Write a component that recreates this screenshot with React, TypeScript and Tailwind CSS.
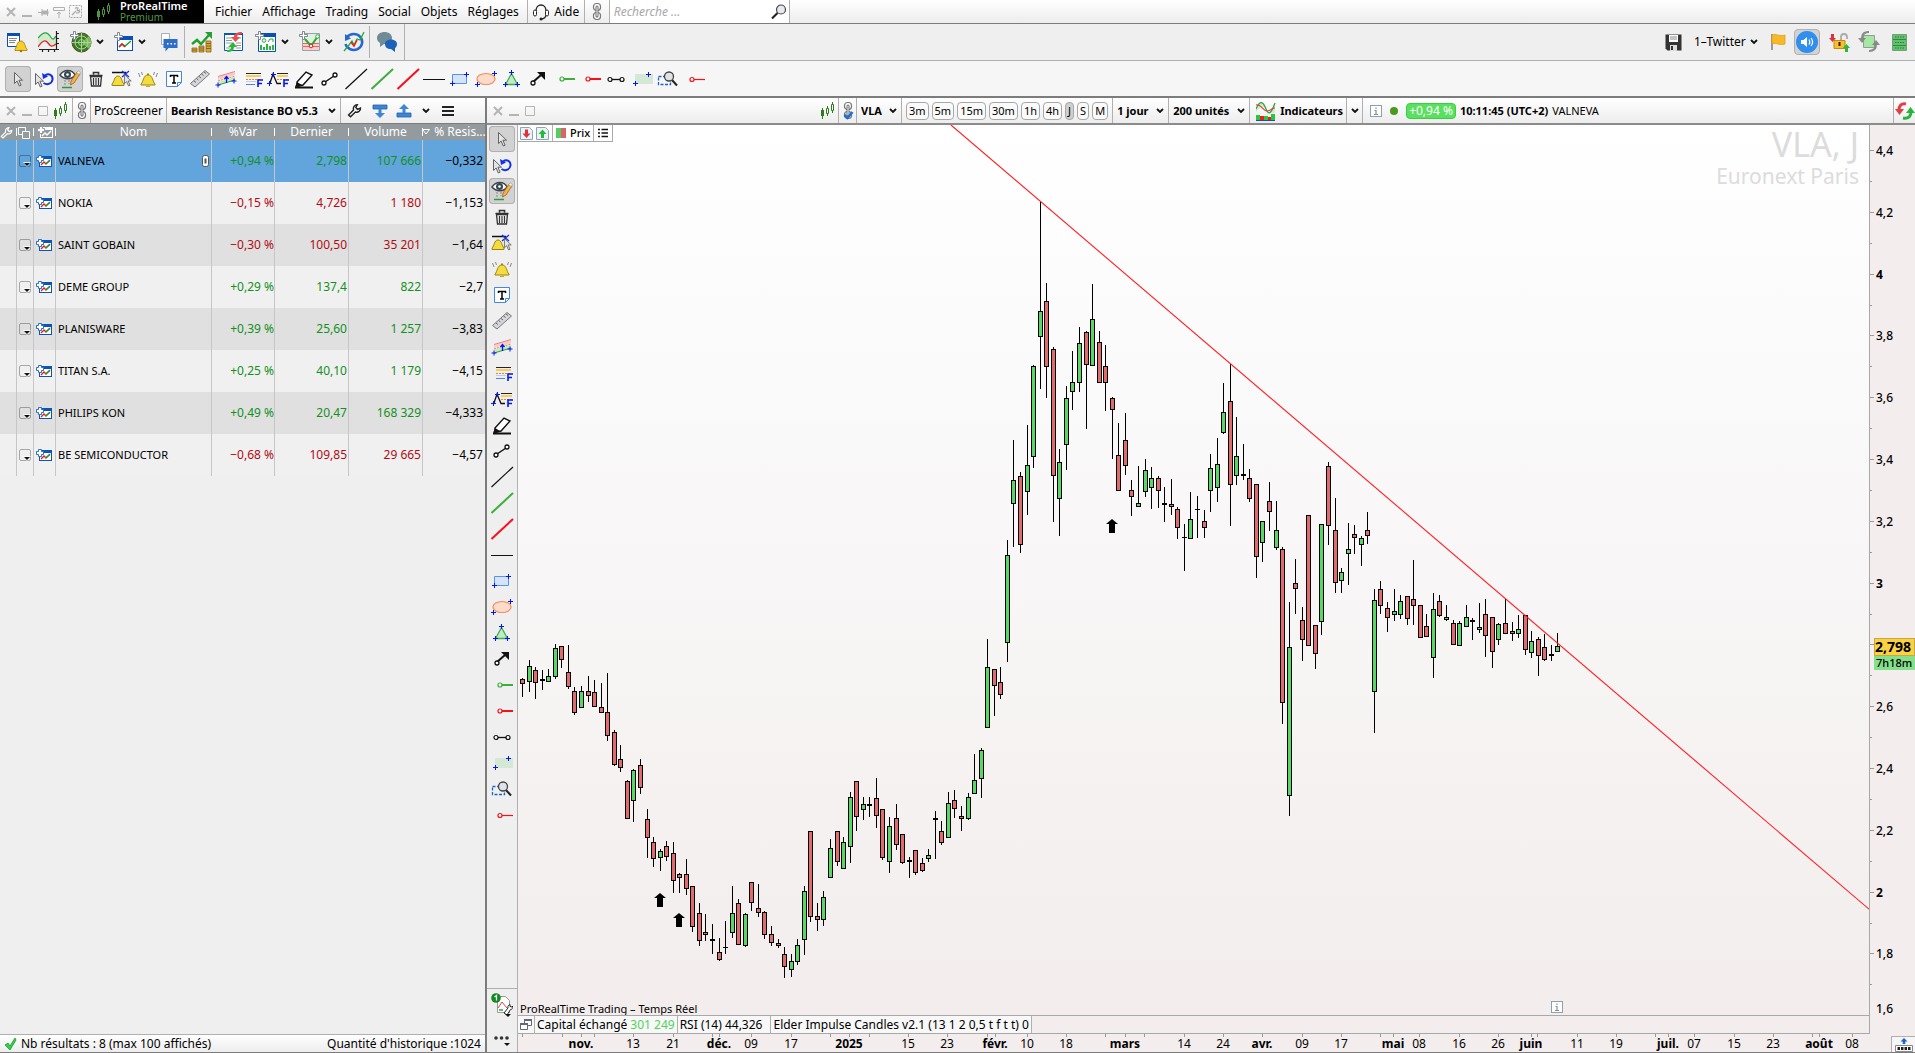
import { useState, type ReactNode } from 'react'
import clsx from 'clsx'

/* ---------- data ---------- */

interface Row {
  name: string
  change: string
  last: string
  volume: string
  resistance: string
  up: boolean
}

const ROWS: Row[] = [
  { name: 'VALNEVA', change: '+0,94 %', last: '2,798', volume: '107 666', resistance: '−0,332', up: true },
  { name: 'NOKIA', change: '−0,15 %', last: '4,726', volume: '1 180', resistance: '−1,153', up: false },
  { name: 'SAINT GOBAIN', change: '−0,30 %', last: '100,50', volume: '35 201', resistance: '−1,64', up: false },
  { name: 'DEME GROUP', change: '+0,29 %', last: '137,4', volume: '822', resistance: '−2,7', up: true },
  { name: 'PLANISWARE', change: '+0,39 %', last: '25,60', volume: '1 257', resistance: '−3,83', up: true },
  { name: 'TITAN S.A.', change: '+0,25 %', last: '40,10', volume: '1 179', resistance: '−4,15', up: true },
  { name: 'PHILIPS KON', change: '+0,49 %', last: '20,47', volume: '168 329', resistance: '−4,333', up: true },
  { name: 'BE SEMICONDUCTOR', change: '−0,68 %', last: '109,85', volume: '29 665', resistance: '−4,57', up: false },
]

// high, body top, body bottom, low, then g(reen) / r(ed)
type Candle = [number, number, number, number, 'g' | 'r']

const CANDLES: Candle[] = [
  [678, 679, 684, 697, 'r'], [660, 666, 682, 692, 'g'], [667, 670, 683, 699, 'r'], [670, 679, 681, 690, 'r'],
  [669, 676, 682, 682, 'g'], [644, 648, 677, 679, 'g'], [646, 646, 660, 668, 'r'], [645, 672, 687, 689, 'r'],
  [687, 691, 713, 715, 'r'], [686, 691, 708, 708, 'g'], [676, 691, 696, 702, 'r'], [680, 692, 707, 707, 'r'],
  [683, 707, 713, 713, 'r'], [673, 712, 736, 741, 'r'], [730, 732, 765, 766, 'r'], [745, 759, 768, 772, 'r'],
  [780, 781, 819, 819, 'r'], [769, 770, 801, 822, 'g'], [759, 765, 788, 794, 'r'], [809, 819, 838, 858, 'r'],
  [837, 842, 859, 867, 'r'], [849, 851, 858, 871, 'g'], [841, 846, 857, 861, 'r'], [842, 853, 881, 893, 'r'],
  [873, 874, 878, 893, 'r'], [859, 874, 889, 895, 'r'], [886, 886, 927, 932, 'r'], [903, 913, 941, 946, 'r'],
  [914, 932, 935, 941, 'r'], [924, 939, 941, 954, 'r'], [938, 952, 960, 961, 'r'], [921, 947, 948, 954, 'r'],
  [886, 913, 933, 938, 'g'], [899, 903, 945, 945, 'r'], [913, 914, 946, 947, 'g'], [882, 882, 903, 911, 'r'],
  [884, 908, 913, 917, 'r'], [911, 912, 935, 939, 'r'], [926, 934, 943, 946, 'r'], [939, 943, 946, 948, 'r'],
  [947, 954, 967, 978, 'r'], [954, 961, 970, 977, 'g'], [939, 945, 962, 965, 'g'], [886, 891, 940, 955, 'g'],
  [831, 831, 917, 922, 'r'], [903, 916, 920, 931, 'r'], [891, 897, 920, 926, 'g'], [839, 848, 878, 878, 'g'],
  [831, 831, 862, 866, 'r'], [837, 842, 869, 869, 'g'], [792, 797, 847, 863, 'g'], [781, 781, 817, 831, 'r'],
  [797, 804, 810, 820, 'g'], [797, 804, 806, 817, 'r'], [778, 798, 816, 828, 'r'], [809, 809, 858, 860, 'r'],
  [817, 826, 862, 873, 'g'], [804, 818, 845, 850, 'r'], [834, 834, 863, 864, 'r'], [857, 860, 862, 878, 'r'],
  [850, 850, 873, 875, 'r'], [858, 863, 871, 872, 'r'], [849, 855, 859, 862, 'g'], [811, 818, 820, 859, 'r'],
  [821, 831, 843, 845, 'r'], [792, 803, 838, 838, 'g'], [790, 800, 809, 818, 'r'], [806, 816, 819, 831, 'r'],
  [793, 797, 819, 820, 'g'], [754, 780, 794, 794, 'g'], [748, 750, 779, 798, 'g'], [639, 667, 728, 728, 'g'],
  [669, 669, 686, 716, 'r'], [667, 682, 695, 699, 'r'], [540, 555, 643, 662, 'g'], [440, 480, 504, 547, 'g'],
  [472, 476, 545, 553, 'r'], [425, 465, 492, 515, 'g'], [365, 366, 457, 468, 'g'], [202, 311, 337, 389, 'g'],
  [283, 301, 367, 398, 'r'], [347, 349, 476, 522, 'r'], [449, 462, 499, 536, 'g'], [386, 398, 445, 470, 'g'],
  [351, 382, 392, 410, 'g'], [327, 343, 383, 392, 'g'], [331, 332, 365, 429, 'r'], [284, 319, 366, 366, 'g'],
  [331, 342, 383, 383, 'r'], [345, 366, 383, 411, 'r'], [397, 398, 410, 459, 'r'], [423, 455, 491, 491, 'r'],
  [413, 440, 466, 475, 'r'], [480, 490, 497, 516, 'r'], [466, 503, 507, 507, 'g'], [459, 470, 492, 497, 'g'],
  [467, 478, 488, 509, 'g'], [476, 478, 491, 508, 'r'], [487, 503, 505, 522, 'r'], [479, 504, 507, 515, 'r'],
  [507, 509, 528, 539, 'r'], [524, 537, 538, 571, 'r'], [492, 519, 539, 539, 'g'], [496, 509, 510, 538, 'r'],
  [510, 521, 528, 538, 'r'], [454, 468, 491, 512, 'g'], [438, 464, 488, 502, 'g'], [383, 412, 433, 434, 'g'],
  [364, 401, 485, 526, 'r'], [417, 456, 476, 485, 'g'], [444, 474, 476, 480, 'r'], [469, 478, 499, 502, 'r'],
  [484, 484, 557, 578, 'r'], [521, 521, 543, 562, 'g'], [482, 501, 512, 531, 'r'], [501, 530, 548, 550, 'g'],
  [547, 549, 703, 724, 'r'], [602, 647, 796, 816, 'g'], [559, 583, 589, 614, 'r'], [607, 620, 640, 661, 'r'],
  [515, 515, 646, 646, 'r'], [625, 625, 654, 669, 'r'], [524, 524, 622, 635, 'g'], [462, 466, 526, 545, 'r'],
  [498, 530, 583, 593, 'r'], [568, 572, 581, 593, 'g'], [523, 549, 554, 585, 'g'], [525, 534, 538, 554, 'r'],
  [536, 538, 545, 566, 'g'], [512, 530, 536, 544, 'r'], [589, 600, 692, 733, 'g'], [581, 589, 606, 614, 'r'],
  [602, 608, 618, 632, 'r'], [589, 611, 615, 621, 'g'], [595, 601, 615, 619, 'g'], [596, 596, 619, 625, 'r'],
  [560, 599, 606, 625, 'r'], [605, 605, 638, 638, 'r'], [614, 626, 637, 637, 'r'], [593, 609, 658, 678, 'g'],
  [595, 601, 616, 617, 'r'], [605, 617, 620, 621, 'g'], [620, 623, 645, 645, 'r'], [621, 623, 646, 646, 'g'],
  [605, 617, 627, 627, 'g'], [618, 620, 622, 640, 'r'], [603, 627, 630, 633, 'g'], [599, 614, 636, 657, 'r'],
  [617, 617, 652, 668, 'r'], [623, 624, 640, 645, 'g'], [599, 623, 634, 634, 'r'], [622, 631, 634, 641, 'r'],
  [615, 629, 634, 638, 'g'], [615, 615, 650, 655, 'r'], [631, 641, 653, 658, 'g'], [637, 639, 656, 676, 'r'],
  [634, 647, 660, 661, 'r'], [645, 654, 656, 661, 'r'], [633, 646, 652, 652, 'g'],
]

const BAR_STEP = 6.553
const PLOT_LEFT = 518
const PLOT_TOP = 125

const ARROWS = [
  [660, 893],
  [679, 913],
  [1112, 519],
]

const DATES: [number, string, boolean?][] = [
  [581, 'nov.', true], [633, '13'], [673, '21'], [719, 'déc.', true], [751, '09'], [791, '17'],
  [849, '2025', true], [908, '15'], [947, '23'], [995, 'févr.', true], [1027, '10'], [1066, '18'],
  [1125, 'mars', true], [1184, '14'], [1223, '24'], [1262, 'avr.', true], [1302, '09'], [1341, '17'],
  [1393, 'mai', true], [1419, '08'], [1459, '16'], [1498, '26'], [1531, 'juin', true], [1577, '11'],
  [1616, '19'], [1668, 'juil.', true], [1694, '07'], [1734, '15'], [1773, '23'], [1819, 'août', true],
  [1852, '08'],
]
const EXTRA_TICKS = [522, 562, 594, 712, 830, 869, 987, 1105, 1144, 1380, 1537, 1655, 1812]

const TIMEFRAMES = ['3m', '5m', '15m', '30m', '1h', '4h', 'J', 'S', 'M']

/* ---------- small pieces ---------- */

function Svg({ w = 22, h = 22, children }: { w?: number; h?: number; children: ReactNode }) {
  return (
    <svg width={w} height={h} viewBox={`0 0 ${w} ${h}`} fill="none" aria-hidden="true" className="shrink-0">
      {children}
    </svg>
  )
}

function Sep() {
  return <div className="w-px shrink-0 self-stretch bg-[#b0b0b0]" />
}

function Chevron() {
  return (
    <Svg w={8} h={6}>
      <path d="M1 1l3 3 3-3" stroke="#111" strokeWidth="1.8" />
    </Svg>
  )
}

function IconButton({ label, className, children }: { label: string; className?: string; children: ReactNode }) {
  return (
    <button type="button" aria-label={label} className={clsx('flex shrink-0 items-center justify-center', className)}>
      {children}
    </button>
  )
}

function Dropdown({ label, value, bold = true, className }: { label: string; value: string; bold?: boolean; className?: string }) {
  return (
    <div className={clsx('relative flex shrink-0 items-center', className)}>
      <select
        aria-label={label}
        defaultValue={value}
        className={clsx('w-full appearance-none bg-transparent pr-3 outline-none', bold && 'text-[11px] font-bold')}
      >
        <option>{value}</option>
      </select>
      <span className="pointer-events-none absolute right-1">
        <Chevron />
      </span>
    </div>
  )
}

function WindowButtons() {
  return (
    <div className="flex shrink-0 items-center gap-1 pl-[5px]">
      <IconButton label="Fermer" className="size-3">
        <Svg w={12} h={12}>
          <path d="M2 2l8 8M10 2l-8 8" stroke="#b4b4b4" strokeWidth="2" />
        </Svg>
      </IconButton>
      <IconButton label="Réduire" className="size-3">
        <Svg w={12} h={12}>
          <path d="M1 10h10" stroke="#b4b4b4" strokeWidth="2" />
        </Svg>
      </IconButton>
      <IconButton label="Agrandir" className="size-3">
        <Svg w={12} h={12}>
          <path d="M1.500 1.500h9v9h-9z" stroke="#b4b4b4" />
        </Svg>
      </IconButton>
    </div>
  )
}

function CandlesIcon({ light = false }: { light?: boolean }) {
  const c = light ? '#4c9a3c' : '#2f7d1f'
  return (
    <Svg w={16} h={18}>
      <path d="M2.500 6v11M7.500 4v10M12.500 0v11" stroke={c} />
      <path d="M1 8h3v6H1z" fill={c} />
      <path d="M6.500 6.500h2v5h-2zM11.500 2.500h2v6h-2z" fill={light ? '#000' : '#fff'} stroke={c} />
    </Svg>
  )
}

function ChainIcon({ checked = false }: { checked?: boolean }) {
  return (
    <Svg w={12} h={20}>
      <rect x="2.500" y="1.500" width="7" height="7" rx="3" fill="#fff" stroke="#777" strokeWidth="1.200" />
      <rect x="2.500" y="10.500" width="7" height="7" rx="3" fill="#fff" stroke="#777" strokeWidth="1.200" />
      <path d="M6 5v9" stroke="#666" strokeWidth="3" strokeLinecap="round" />
      <path d="M6 5v9" stroke="#fff" strokeLinecap="round" />
      {checked && <path d="M2.500 14l3 3 5-6" stroke="#1d6fd8" strokeWidth="2.500" />}
    </Svg>
  )
}

function ChartWindow() {
  return (
    <Svg w={20} h={20}>
      <rect x="3.500" y="4.500" width="15" height="14" fill="#fff" stroke="#0a4fb5" />
      <path d="M3 4h16v4H3z" fill="#0a4fb5" />
      <path d="M5 15l3-3 3 2 6-5" stroke="#18a030" strokeWidth="1.500" />
      <path d="M5 15l3-3 3 3" stroke="#e02020" strokeWidth="1.500" />
      <path d="M3.500.5h2v3h3v2h-3v3h-2v-3h-3v-2h3z" fill="#fff" stroke="#7d8890" />
    </Svg>
  )
}

function RowChartIcon({ header = false }: { header?: boolean }) {
  const c = header ? '#fff' : '#0a55b8'
  return (
    <Svg w={16} h={13}>
      <rect x="3.500" y="1.500" width="12" height="10" fill={header ? 'none' : '#fff'} stroke={c} />
      <path d="M3 1h13v3H3z" fill={c} />
      <path d="M5 10l3-3 2 2 4-4" stroke={header ? '#fff' : '#e02020'} strokeWidth="1.300" />
      {!header && <path d="M9.500 9L14 5.500" stroke="#18a030" strokeWidth="1.300" />}
      <path d="M2.500.5h3v2h2v3h-2v2h-3v-2h-2v-3h2z" fill="#fff" stroke={header ? '#939b9f' : '#2a6fc8'} />
    </Svg>
  )
}

function Wrench({ color = '#222', size = 15 }: { color?: string; size?: number }) {
  return (
    <svg width={size} height={size} viewBox="0 0 15 15" fill="none" aria-hidden="true" className="shrink-0">
      <path
        d="M1.500 12l5-5c-.8-2.500 1-5.200 3.800-5.200L8.800 4.500l1.700 1.800L13.500 5c.3 3-2.500 4.800-5 4l-5 4.800z"
        stroke={color}
        strokeWidth="1.400"
      />
    </svg>
  )
}

function Plus({ x, y }: { x: number; y: number }) {
  return <path d={`M${x - 2.5} ${y}h5M${x} ${y - 2.5}v5`} stroke="#0018ee" />
}

const Cursor = ({ x = 0, y = 0 }: { x?: number; y?: number }) => (
  <path
    transform={`translate(${x} ${y})`}
    d="M.5.5v11l2.600-2.500 2.200 5 1.800-.8-2.200-5h3.600z"
    fill="#e4e4e4"
    stroke="#555"
    strokeWidth=".9"
  />
)

const Bell = () => (
  <>
    <path d="M6 18c2.500-2 2-9 7-9s4.500 7 7 9v1H6z" fill="#f4dc3c" stroke="#9a8410" />
    <path d="M11 20h4v1h-4z" fill="#c9a818" />
    <path d="M12 7.500h2V9h-2z" fill="#9a8410" />
  </>
)

/* every drawing tool fills a 26px cell; the same set is used for both tool bars */
const TOOLS: { name: string; icon: ReactNode; active?: boolean }[] = [
  { name: 'Curseur', active: true, icon: <Cursor x={9} y={6} /> },
  {
    name: 'Annuler',
    icon: (
      <>
        <Cursor x={4} y={7} />
        <path d="M14 9.500c4-3 8 0 7.500 4s-5 6-9 3.500" stroke="#1230e8" strokeWidth="2" />
        <path d="M11 7l1 6 5-2.500z" fill="#1230e8" />
      </>
    ),
  },
  {
    name: 'Afficher les objets',
    active: true,
    icon: (
      <>
        <path d="M3 9c4-6 12-6 15 0-3 5-11 5-15 0z" fill="#fff" stroke="#3a4650" strokeWidth="1.500" />
        <circle cx="10.500" cy="8.500" r="3.500" fill="#3a4650" />
        <circle cx="10.500" cy="8.500" r="1.300" fill="#fff" />
        <path d="M8 14v5M12 14v4" stroke="#888" strokeDasharray="2 1" />
        <path d="M5 21.500h10" stroke="#2a9d3a" strokeWidth="1.500" />
        <path d="M14 15l6-9 3 2-6 9-3.500 2z" fill="#f3b04a" stroke="#9a6420" strokeWidth=".8" />
        <path d="M19.500 6.500l3 2 .8-2-2-1.500z" fill="#fff" stroke="#888" strokeWidth=".6" />
      </>
    ),
  },
  {
    name: 'Supprimer',
    icon: (
      <>
        <path d="M6.500 9.500h13M10.500 8.500v-2h5v2" stroke="#333" strokeWidth="1.600" />
        <path d="M7.500 10.500h11l-1 9.500h-9z" fill="#e8e8e8" stroke="#333" strokeWidth="1.300" />
        <path d="M10.500 12v7M13 12v7M15.500 12v7" stroke="#333" strokeWidth="1.100" />
      </>
    ),
  },
  {
    name: 'Alerte sur objet',
    icon: (
      <>
        <path d="M3 6.500h14" stroke="#111" strokeWidth="1.500" />
        <path d="M3 18c2.500-2 2-8 6-8s3.500 6 6 8v1.500H3z" fill="#f4dc3c" stroke="#9a8410" />
        <path d="M13 5l7 6M20 5l-7 6" stroke="#1230e8" strokeWidth="1.300" />
        <g transform="translate(15 8) scale(.85)"><Cursor /></g>
      </>
    ),
  },
  {
    name: 'Alerte',
    icon: (
      <>
        <Bell />
        <path d="M3.500 7L5 11M6.500 6l1 3M22.500 7L21 11M19.500 6l-1 3" stroke="#888" />
      </>
    ),
  },
  {
    name: 'Texte',
    icon: (
      <>
        <path d="M5.500 5.500h15v11l-4 4h-11z" fill="#fff" stroke="#3f86ee" />
        <path d="M20.500 16.500h-4v4" stroke="#3f86ee" />
        <path d="M9.500 11V9.500h7V11M13 9v7.500M11 17h4" stroke="#000" strokeWidth="1.500" />
      </>
    ),
  },
  {
    name: 'Règle',
    icon: (
      <>
        <path d="M3.500 17.500L18 4.500l4.500 3.500L8 21z" fill="#d6d6da" stroke="#777" />
        <path d="M7 15l2 1.500M9.500 12.500l2 1.500M12 10.500l2 1.500M14.500 8l2 1.500M17 6l2 1.500" stroke="#666" />
      </>
    ),
  },
  {
    name: 'Canal',
    icon: (
      <>
        <path d="M5 11l17-5v3L5 14z" fill="#f9caca" />
        <path d="M5 16l17-5v4L5 19z" fill="#c4e8c8" />
        <path d="M5 10.500l17-5" stroke="#e88080" />
        <path d="M5 15l17-5" stroke="#f08040" strokeDasharray="2 1" />
        <path d="M5 19l17-5" stroke="#30a040" />
        <path d="M13.500 17v-6M11.500 13l2-2.500 2 2.500" stroke="#0018ee" strokeWidth="1.300" />
        <Plus x={5} y={19} />
        <Plus x={21} y={15} />
      </>
    ),
  },
  {
    name: 'Fibonacci',
    icon: (
      <>
        <path d="M7 7.500h15" stroke="#222" />
        <path d="M7 10h15" stroke="#f6cd60" strokeWidth="2" />
        <path d="M7 13.500h15" stroke="#f08030" strokeDasharray="2 1" />
        <path d="M7 15.500h10" stroke="#b8ccf6" />
        <path d="M7 18.500h9" stroke="#5080f0" />
        <path d="M19 21v-7h5M19 17.500h4" stroke="#0018ee" strokeWidth="1.600" />
      </>
    ),
  },
  {
    name: 'Extension de Fibonacci',
    icon: (
      <>
        <path d="M12 7.500h11" stroke="#222" />
        <path d="M12 10h11" stroke="#f6cd60" strokeWidth="2" />
        <path d="M12 13.500h11" stroke="#f08030" strokeDasharray="2 1" />
        <path d="M5 17L8 8l4 9.500h4" stroke="#111" strokeWidth="1.300" />
        <Plus x={4.5} y={17.5} />
        <Plus x={8.5} y={8.5} />
        <path d="M19 21v-7h5M19 17.500h4" stroke="#0018ee" strokeWidth="1.600" />
      </>
    ),
  },
  {
    name: 'Crayon',
    icon: (
      <>
        <path d="M6 16l9-10 6 3-9 10-6 1.500z" fill="#fff" stroke="#111" strokeWidth="1.400" />
        <path d="M4 21l2-5 5 3z" fill="#111" />
        <path d="M4 21.500h18" stroke="#111" strokeWidth="2" />
      </>
    ),
  },
  {
    name: 'Segment',
    icon: (
      <>
        <path d="M8 16l9-6" stroke="#111" strokeWidth="1.500" />
        <circle cx="7" cy="17" r="2" fill="#fff" stroke="#111" strokeWidth="1.300" />
        <circle cx="18" cy="9" r="2" fill="#fff" stroke="#111" strokeWidth="1.300" />
      </>
    ),
  },
  { name: 'Ligne', icon: <path d="M2.500 23L24 3" stroke="#111" strokeWidth="1.200" /> },
  { name: 'Ligne verte', icon: <path d="M2.500 23L24 3" stroke="#3cae3c" strokeWidth="2" /> },
  { name: 'Ligne rouge', icon: <path d="M2.500 23L24 3" stroke="#f61018" strokeWidth="2" /> },
  { name: 'Horizontale', icon: <path d="M2 13.500h22" stroke="#111" /> },
  {
    name: 'Rectangle',
    icon: (
      <>
        <path d="M5.500 8.500h14v9h-14z" fill="#d6e4fb" stroke="#5a92f0" />
        <Plus x={5.5} y={17.5} />
        <Plus x={19.5} y={8.5} />
      </>
    ),
  },
  {
    name: 'Ellipse',
    icon: (
      <>
        <ellipse cx="13" cy="13" rx="9" ry="5.500" fill="#fbdccb" stroke="#f58a60" strokeWidth="1.200" />
        <Plus x={4.5} y={18.5} />
        <Plus x={21.5} y={7.5} />
      </>
    ),
  },
  {
    name: 'Triangle',
    icon: (
      <>
        <path d="M12.500 7.500l6 11h-12z" fill="#c6e8c8" stroke="#3cae4c" strokeWidth="1.300" />
        <Plus x={12.5} y={6.5} />
        <Plus x={6.5} y={18.5} />
        <Plus x={18.5} y={18.5} />
      </>
    ),
  },
  {
    name: 'Flèche',
    icon: (
      <>
        <path d="M8 16l8-7" stroke="#111" strokeWidth="2" />
        <path d="M12 6h8v8z" fill="#111" />
        <circle cx="8" cy="17" r="2" fill="#fff" stroke="#111" strokeWidth="1.300" />
      </>
    ),
  },
  {
    name: 'Demi-droite verte',
    icon: (
      <>
        <path d="M11 13h13" stroke="#3cae3c" strokeWidth="2" />
        <circle cx="11" cy="13" r="2" fill="#fff" stroke="#3cae3c" strokeWidth="1.200" />
      </>
    ),
  },
  {
    name: 'Demi-droite rouge',
    icon: (
      <>
        <path d="M11 13h13" stroke="#f61018" strokeWidth="2" />
        <circle cx="11" cy="13" r="2" fill="#fff" stroke="#f61018" strokeWidth="1.200" />
      </>
    ),
  },
  {
    name: 'Segment horizontal',
    icon: (
      <>
        <path d="M7 13.500h12" stroke="#111" strokeWidth="1.300" />
        <circle cx="7" cy="13.500" r="2" fill="#fff" stroke="#111" strokeWidth="1.200" />
        <circle cx="19" cy="13.500" r="2" fill="#fff" stroke="#111" strokeWidth="1.200" />
      </>
    ),
  },
  {
    name: 'Zone',
    icon: (
      <>
        <path d="M6 8h18v10H6z" fill="#d5e8d5" />
        <Plus x={6.5} y={17.5} />
        <Plus x={19.5} y={8.5} />
      </>
    ),
  },
  {
    name: 'Zoom',
    icon: (
      <>
        <path d="M3.500 10.500h12v8h-12z" stroke="#1d66c8" strokeWidth="1.300" strokeDasharray="3 1.500" />
        <path d="M17 14l5 5.500" stroke="#222" strokeWidth="2" />
        <circle cx="14" cy="10.500" r="4.500" fill="#dfe3e6" stroke="#444" strokeWidth="1.300" />
      </>
    ),
  },
  {
    name: 'Rayon',
    icon: (
      <>
        <path d="M11 13.500h13" stroke="#f61018" strokeWidth="1.200" />
        <circle cx="11" cy="13.500" r="2" fill="#fff" stroke="#f61018" strokeWidth="1.200" />
      </>
    ),
  },
]

function ToolButtons() {
  return (
    <>
      {TOOLS.map((tool) => (
        <button
          key={tool.name}
          type="button"
          aria-label={tool.name}
          className={clsx('size-[26px] shrink-0 rounded-sm', tool.active && 'bg-[#d2d2d2] ring-1 ring-[#b0b0b0] ring-inset')}
        >
          <Svg w={26} h={26}>
            {tool.icon}
          </Svg>
        </button>
      ))}
    </>
  )
}

/* ---------- top bars ---------- */

function MenuBar() {
  return (
    <header className="flex h-6 shrink-0 border-b border-[#7c7c7c] bg-linear-to-b from-white to-[#ededed]">
      <div className="flex w-[88px] shrink-0 items-center gap-1 pl-[5px]">
        <Svg w={12} h={12}>
          <path d="M2 2l8 8M10 2l-8 8" stroke="#b4b4b4" strokeWidth="2" />
        </Svg>
        <Svg w={12} h={12}>
          <path d="M1 10h10" stroke="#b4b4b4" strokeWidth="2" />
        </Svg>
        <Svg w={12} h={12}>
          <path d="M1 6.500h4M5 3v7M10.500 3v7M5 5h6v3H5z" fill="#b0b0b0" stroke="#b0b0b0" />
        </Svg>
        <Svg w={12} h={12}>
          <path d="M.5 1.500h11v3H.5zM6 12V6M4 8l2-2 2 2" stroke="#b0b0b0" />
        </Svg>
        <Svg w={13} h={13}>
          <path d="M.5.5h12v12H.5z" stroke="#aaa" strokeDasharray="2 1" />
          <path d="M3 10l4-4M6 3.500c1-1 2-1 3-.5L8 5l1 1 1.500-1c.5 1 0 2-1 3H7" stroke="#aaa" strokeWidth="1.200" />
        </Svg>
      </div>
      <div className="flex w-[116px] shrink-0 items-center gap-2 bg-black pl-2">
        <CandlesIcon light />
        <div className="flex flex-col">
          <span className="text-[11px] leading-3 font-semibold text-white">ProRealTime</span>
          <span className="text-[10px] leading-[11px] text-[#4f9a42]">Premium</span>
        </div>
      </div>
      <nav className="flex items-center gap-2.5 pr-2 pl-[11px]">
        <button type="button">Fichier</button>
        <button type="button">Affichage</button>
        <button type="button">Trading</button>
        <button type="button">Social</button>
        <button type="button">Objets</button>
        <button type="button">Réglages</button>
      </nav>
      <Sep />
      <button type="button" className="flex w-14 items-center justify-center gap-1">
        <Svg w={18} h={18}>
          <path d="M4 8C4 0 14 0 14 8M14 11c0 3-1.500 5-5 5" stroke="#222" strokeWidth="1.300" />
          <rect x="1.500" y="7" width="3" height="6" rx="1.500" fill="#fff" stroke="#222" />
          <rect x="13.500" y="7" width="3" height="6" rx="1.500" fill="#fff" stroke="#222" />
          <circle cx="9" cy="16" r="1.500" fill="#222" />
        </Svg>
        Aide
      </button>
      <Sep />
      <IconButton label="Lier" className="w-6">
        <ChainIcon />
      </IconButton>
      <Sep />
      <label className="flex w-[179px] items-center bg-white">
        <input
          type="search"
          aria-label="Recherche"
          placeholder="Recherche ..."
          className="min-w-0 flex-1 bg-transparent pl-1 outline-none placeholder:text-[#a8a8a8] placeholder:italic"
        />
        <span className="pr-0.5">
          <Svg w={16} h={16}>
            <path d="M6.500 9L1 14.500" stroke="#222" strokeWidth="2.200" />
            <circle cx="10" cy="5.500" r="4.500" fill="#e6eaec" stroke="#444" strokeWidth="1.200" />
          </Svg>
        </span>
      </label>
      <Sep />
    </header>
  )
}

function MainToolbar() {
  return (
    <div className="flex h-[37px] shrink-0 items-center border-b border-[#b0b0b0] pl-1.5">
      <IconButton label="Alertes">
        <Svg>
          <path d="M1.500 2.500h12v13h-12z" fill="#fff" stroke="#0a4fb5" />
          <path d="M1 2h13v3H1z" fill="#0a4fb5" />
          <path d="M3 7.500h8M3 9.500h7M3 11.500h6" stroke="#888" />
          <path d="M9 18c2-1.500 1.500-8 6-8s3.500 6.500 6 8v1.500H9z" fill="#f6cf2a" stroke="#a07c10" strokeWidth=".8" />
          <circle cx="15" cy="20" r="1.300" fill="#a07c10" />
        </Svg>
      </IconButton>
      <IconButton label="Graphique" className="ml-2.5">
        <Svg>
          <path d="M0 7c5-6 9-7 12-2s4 3 6 0v10l-6-2-5-3-7 6z" fill="#cfeacf" />
          <path d="M0 7c5-6 9-7 12-2s4 3 6 0" stroke="#28a838" strokeWidth="1.300" />
          <path d="M0 16c4-6 7-8 10-4s4 4 8 1" stroke="#e82020" strokeWidth="1.300" />
          <path d="M18.500 0v19M1 18.500h20M18 2.500h3M18 7.500h3M18 12.500h3M4.500 18v3M10.500 18v3M16.500 18v3" stroke="#222" strokeWidth="1.200" />
        </Svg>
      </IconButton>
      <IconButton label="Screener" className="ml-2.5 gap-1">
        <Svg>
          <circle cx="11.500" cy="11.500" r="9.500" fill="#3c7a28" stroke="#5a4a30" />
          <path d="M11.500 11.500L19 5a10 10 0 010 13z" fill="#79b85c" />
          <circle cx="11.500" cy="11.500" r="6.500" stroke="#a8d690" />
          <circle cx="11.500" cy="11.500" r="3" stroke="#a8d690" />
          <path d="M11.500 2v19M2 11.500h19" stroke="#a8d690" />
          <path d="M3.500.5h2v3h3v2h-3v3h-2v-3h-3v-2h3z" fill="#fff" stroke="#7d8890" />
        </Svg>
        <Chevron />
      </IconButton>
      <IconButton label="Nouveau graphique" className="ml-2.5 gap-1">
        <ChartWindow />
        <Chevron />
      </IconButton>
      <IconButton label="Messages" className="ml-3.5">
        <Svg w={20} h={20}>
          <path d="M1.500 1.500h8v11h-8z" fill="#fff" stroke="#a8aeb4" />
          <path d="M3.500 7h14v9h-9l-3 3.500V16h-2z" fill="#2d6fc8" />
          <path d="M7 11h1.500v1.500H7zM10.500 11H12v1.500h-1.500zM14 11h1.500v1.500H14z" fill="#fff" />
        </Svg>
      </IconButton>
      <div className="mr-1.5 ml-1 h-8 w-px bg-[#b0b0b0]" />
      <IconButton label="Portefeuille">
        <Svg>
          <path d="M1 17h5v4H1zM8 15h5v6H8zM15 10h5v11h-5z" fill="#d8a93a" stroke="#8c6414" strokeWidth=".8" />
          <path d="M1 19h5M8 17h5M8 19h5M15 12.500h5M15 15h5M15 17.500h5" stroke="#8c6414" />
          <path d="M1 13l5-4 4 4 8-9" stroke="#22a030" strokeWidth="2.500" />
          <path d="M14 1h7v7z" fill="#22a030" />
        </Svg>
      </IconButton>
      <IconButton label="Ordres" className="ml-2.5">
        <Svg>
          <path d="M1.500 2.500h18v17h-18z" fill="#fff" stroke="#0a55b8" />
          <path d="M1 2h19v2H1z" fill="#0a55b8" />
          <path d="M3 7h6M3 9.500h6M3 12h6M3 17h4M13 7h5M13 12h5M13 14.500h5M13 17h5" stroke="#999" />
          <path d="M19 1c-5 0-8 2-8 5H8l4.500 5L17 6h-3c0-2 2-3 5-3z" fill="#f04a4a" />
          <path d="M4 21c5 0 7-2 7-5h3l-4-5-5 5h3c0 2-1 3-4 3z" fill="#28b83c" />
        </Svg>
      </IconButton>
      <IconButton label="Espaces" className="ml-2.5 gap-1">
        <Svg>
          <path d="M3.500 2.500h17v18h-17z" fill="#fff" stroke="#0a4fb5" />
          <path d="M3 2h18v4H3z" fill="#0a4fb5" />
          <circle cx="9" cy="9.500" r="1.800" stroke="#28a838" />
          <path d="M13 11l2-3h3v3" stroke="#28a838" />
          <path d="M5 14h2v5H5zM8 16h2v3H8zM11 13h2v6h-2zM14 15h2v4h-2zM17 14h2v5h-2z" fill="#28b83c" />
          <path d="M3.500.5h2v3h3v2h-3v3h-2v-3h-3v-2h3z" fill="#fff" stroke="#7d8890" />
        </Svg>
        <Chevron />
      </IconButton>
      <IconButton label="Stratégies" className="ml-2.5 gap-1">
        <Svg>
          <path d="M3.500 2.500h17v17h-17z" fill="#dff2df" stroke="#9aa2a8" />
          <path d="M4 12h16v7H4z" fill="#f8d0d0" />
          <path d="M4 12.500h16M4 15.500h16" stroke="#f06060" />
          <path d="M6 8l6 7 7-10" stroke="#28a838" strokeWidth="2" />
          <circle cx="12" cy="15" r="1.800" fill="#fff" stroke="#e02020" />
          <circle cx="18.500" cy="5.500" r="1.800" fill="#fff" stroke="#28a838" />
          <path d="M3.500.5h2v3h3v2h-3v3h-2v-3h-3v-2h3z" fill="#fff" stroke="#7d8890" />
        </Svg>
        <Chevron />
      </IconButton>
      <IconButton label="Replay" className="ml-2.5">
        <Svg>
          <path d="M4 6a8.500 8 0 1 1-1.500 7" stroke="#2468d0" strokeWidth="2.500" />
          <path d="M2 3v7l6-2.500z" fill="#2468d0" />
          <path d="M1 20l5-6 3-4 2 4 3-6 3 1 4-8" stroke="#28a838" strokeWidth="1.300" />
          <path d="M8 11l3 4 3-6" stroke="#e82020" strokeWidth="1.500" />
        </Svg>
      </IconButton>
      <div className="mr-1.5 ml-1 h-8 w-px bg-[#b0b0b0]" />
      <IconButton label="Discussion" className="mr-1.5">
        <Svg>
          <path d="M1 7c0-8 15-8 15 0 0 4-4 6-8 6l-4 3v-4C2 11 1 9 1 7z" fill="#6f8b96" />
          <path d="M9 13c0-6 12-6 12 0 0 2-1 3.500-2 4v4l-4-3c-4 0-6-2-6-5z" fill="#1d62ba" />
        </Svg>
      </IconButton>
      <Sep />

      <div className="ml-auto flex items-center pr-2">
        <IconButton label="Enregistrer">
          <Svg w={17} h={17}>
            <path d="M.5.5h16v16h-14l-2-2z" fill="#333" />
            <path d="M4 1h9v7H4z" fill="#fff" />
            <path d="M5 3h7M5 5h7" stroke="#888" />
            <path d="M5 11h7v6H5z" fill="#ddd" />
            <path d="M6 12h2v4H6z" fill="#333" />
          </Svg>
        </IconButton>
        <Dropdown label="Espace de travail" value="1–Twitter" bold={false} className="ml-3 w-[68px]" />
        <IconButton label="Drapeau" className="ml-2">
          <Svg w={16} h={18}>
            <path d="M2 1v16" stroke="#999" strokeWidth="2" />
            <path d="M2 2c4-2 7 2 13 0v9c-5 2-9-2-13 0z" fill="#f9b826" stroke="#e09a10" strokeWidth=".7" />
          </Svg>
        </IconButton>
        <button type="button" aria-label="Son" className="ml-2 flex size-[26px] items-center justify-center rounded-sm border border-[#b0b0b0] bg-[#d2d2d2]">
          <Svg>
            <circle cx="11" cy="11" r="11" fill="#2f8eee" />
            <path d="M5 9h2.500L11 6v10l-3.500-3H5z" fill="#fff" />
            <path d="M13 8.500c1 1.500 1 3.500 0 5M15 7c2 2.500 2 5.500 0 8" stroke="#fff" strokeWidth="1.200" />
          </Svg>
        </button>
        <IconButton label="Verrou" className="ml-2">
          <Svg>
            <path d="M6 9.500h11v8H6z" fill="#f9bd2a" stroke="#c98a10" />
            <path d="M11.500 11v4" stroke="#222" strokeWidth="2" />
            <path d="M13 9V6c0-4 6-4 6 0v2" stroke="#aaa" strokeWidth="1.800" />
            <path d="M3 3h3v4h2l-3.500 4L1 7h2z" fill="#e03040" />
            <path d="M17 21h3v-4h2l-3.500-4-3.500 4h2z" fill="#28b83c" />
          </Svg>
        </IconButton>
        <IconButton label="Synchroniser" className="ml-2">
          <Svg>
            <path d="M5.500 4.500h11v12h-11z" fill="#a3e8a3" stroke="#999" />
            <path d="M11 1C6 1 4 3 4 8" stroke="#8a8a8a" strokeWidth="2.200" />
            <path d="M0 7h8l-4 5z" fill="#8a8a8a" />
            <path d="M11 20c5 0 7-2 7-7" stroke="#8a8a8a" strokeWidth="2.200" />
            <path d="M14 14h8l-4-5z" fill="#8a8a8a" />
          </Svg>
        </IconButton>
        <IconButton label="Serveur" className="ml-3">
          <Svg w={15} h={17}>
            <path d="M.5.5h14v16H.5z" fill="#5cc46a" stroke="#7c9a7c" />
            <path d="M1 5.500h13M1 11.500h13" stroke="#3f7f48" />
            <path d="M3 3h9M3 8.500h9M3 14h9" stroke="#357a40" strokeDasharray="1.500 1" />
          </Svg>
        </IconButton>
      </div>
    </div>
  )
}

/* ---------- screener ---------- */

function Screener() {
  const [selected, setSelected] = useState(0)
  const head = 'relative border-r border-transparent p-0 text-center font-normal after:absolute after:top-1 after:-right-px after:h-2 after:w-px after:bg-white'
  const cell = 'border-r border-[#c6c6c6] p-0'

  return (
    <section className="flex w-[487px] shrink-0 flex-col border-r-2 border-[#7c7c7c]">
      <div className="flex h-[26px] shrink-0 items-stretch border-b border-[#7c7c7c] bg-linear-to-b from-white to-[#ededed]">
        <WindowButtons />
        <span className="flex w-[23px] items-center pl-1">
          <CandlesIcon />
        </span>
        <Sep />
        <IconButton label="Lier la liste" className="w-[17px]">
          <ChainIcon />
        </IconButton>
        <Sep />
        <h2 className="flex w-[75px] items-center justify-center">ProScreener</h2>
        <Sep />
        <Dropdown label="Screener" value="Bearish Resistance BO v5.3" className="w-[173px] pl-1" />
        <Sep />
        <IconButton label="Paramètres" className="ml-1.5">
          <Wrench />
        </IconButton>
        <IconButton label="Importer" className="ml-2.5">
          <Svg w={16} h={16}>
            <path d="M1 2h14v4H1z" fill="#3d86d6" stroke="#2060a8" strokeWidth=".8" />
            <path d="M6.500 6h3v4H13l-5 5-5-5h3.500z" fill="#3d86d6" />
          </Svg>
        </IconButton>
        <IconButton label="Exporter" className="ml-2">
          <Svg w={16} h={16}>
            <path d="M1 10h14v4H1z" fill="#3d86d6" stroke="#2060a8" strokeWidth=".8" />
            <path d="M6.500 10V6H3l5-5 5 5H9.500v4z" fill="#3d86d6" />
          </Svg>
        </IconButton>
        <IconButton label="Plus" className="ml-2.5">
          <Chevron />
        </IconButton>
        <IconButton label="Menu" className="ml-3">
          <Svg w={12} h={12}>
            <path d="M0 2h12M0 6h12M0 10h12" stroke="#222" strokeWidth="2" />
          </Svg>
        </IconButton>
      </div>

      <table className="w-full table-fixed border-separate border-spacing-0">
        <colgroup>
          <col className="w-[17px]" />
          <col className="w-[17px]" />
          <col className="w-[22px]" />
          <col className="w-[156px]" />
          <col className="w-[63px]" />
          <col className="w-[74px]" />
          <col className="w-[74px]" />
          <col />
        </colgroup>
        <thead>
          <tr className="h-4 bg-[#939b9f] text-white">
            <th className={head} aria-label="Paramètres"><Wrench color="#fff" size={13} /></th>
            <th className={head} aria-label="Sélection">
              <Svg w={14} h={13}>
                <path d="M1.500 1.500h7v7h-7z" stroke="#fff" />
                <path d="M5.500 5.500h7v7h-7z" fill="#939b9f" stroke="#fff" />
              </Svg>
            </th>
            <th className={head} aria-label="Graphique"><span className="flex justify-center"><RowChartIcon header /></span></th>
            <th className={head}>Nom</th>
            <th className={head}>%Var</th>
            <th className={head}>Dernier</th>
            <th className={head}>Volume</th>
            <th className="p-0 font-normal">
              <span className="flex items-center justify-center gap-1 whitespace-nowrap">
                <Svg w={8} h={6}>
                  <path d="M.5.5h7L4 5z" stroke="#fff" />
                </Svg>
                % Resis...
              </span>
            </th>
          </tr>
        </thead>
        <tbody>
          {ROWS.map((row, i) => (
            <tr
              key={row.name}
              onClick={() => setSelected(i)}
              className={clsx('h-[42px]', i === selected ? 'bg-[#62a4dc]' : i % 2 ? 'bg-[#f0f0f0]' : 'bg-[#e0e0e0]')}
            >
              <td className={cell} />
              <td className={clsx(cell, 'relative')}>
                <input
                  type="checkbox"
                  aria-label={`Sélectionner ${row.name}`}
                  className="ml-0.5 block size-3 appearance-none rounded-xs border border-black/30"
                />
                <span className="pointer-events-none absolute right-0.5 bottom-[15px]">
                  <Svg w={8} h={5}>
                    <path d="M0 0h8L4 5z" fill="#fff" fillOpacity=".8" />
                    <path d="M1 1h6L4 4z" fill="#111" />
                  </Svg>
                </span>
              </td>
              <td className={cell}>
                <button type="button" aria-label={`Ouvrir ${row.name}`} className="ml-0.5 block">
                  <RowChartIcon />
                </button>
              </td>
              <td className={cell}>
                <span className="flex items-center justify-between px-0.5 text-[11px]">
                  {row.name}
                  {i === 0 && (
                    <Svg w={7} h={12}>
                      <rect x=".5" y=".5" width="6" height="11" rx="2" fill="#fff" stroke="#555" />
                      <path d="M3.500 3.500v5" stroke="#555" strokeWidth="2" />
                    </Svg>
                  )}
                </span>
              </td>
              <td className={clsx(cell, 'text-right', row.up ? 'text-[#139022]' : 'text-[#b00c14]')}>{row.change}</td>
              <td className={clsx(cell, 'pr-px text-right', row.up ? 'text-[#139022]' : 'text-[#b00c14]')}>{row.last}</td>
              <td className={clsx(cell, 'pr-px text-right', row.up ? 'text-[#139022]' : 'text-[#b00c14]')}>{row.volume}</td>
              <td className="p-0 pr-0.5 text-right">{row.resistance}</td>
            </tr>
          ))}
        </tbody>
      </table>

      <footer className="mt-auto flex h-[18px] shrink-0 items-center justify-between border-t border-[#b0b0b0] bg-linear-to-b from-white to-[#ededed] px-1">
        <span className="flex items-center gap-1">
          <Svg w={13} h={13}>
            <path d="M1 8l3-2 2 3 5-8 1 2-6 10z" fill="#35d04a" stroke="#18a030" strokeWidth=".8" />
          </Svg>
          Nb résultats : 8 (max 100 affichés)
        </span>
        <span>Quantité d'historique :1024</span>
      </footer>
    </section>
  )
}

/* ---------- chart ---------- */

function ChartHeader() {
  const [frame, setFrame] = useState('J')
  return (
    <div className="flex h-[27px] shrink-0 items-stretch border-b-2 border-[#8c8c8c] bg-linear-to-b from-white to-[#ededed]">
      <div className="flex w-[333px] shrink-0 items-stretch">
        <WindowButtons />
      </div>
      <span className="flex w-[18px] items-center">
        <CandlesIcon />
      </span>
      <Sep />
      <IconButton label="Lier le graphique" className="w-[17px]">
        <ChainIcon checked />
      </IconButton>
      <Sep />
      <Dropdown label="Valeur" value="VLA" className="w-11 pl-1" />
      <Sep />
      <div className="flex items-center gap-[3px] px-1">
        {TIMEFRAMES.map((t) => (
          <button
            key={t}
            type="button"
            onClick={() => setFrame(t)}
            className={clsx(
              'h-[18px] rounded-sm border border-[#a8a8a8] px-0.5 text-[11px] leading-4',
              t === frame ? 'bg-[#cfcfcf]' : 'bg-[#fafafa]',
            )}
          >
            {t}
          </button>
        ))}
      </div>
      <Sep />
      <Dropdown label="Unité de temps" value="1 jour" className="w-[55px] pl-1" />
      <Sep />
      <Dropdown label="Historique" value="200 unités" className="w-20 pl-1" />
      <Sep />
      <button type="button" className="flex w-24 items-center gap-1 pl-1.5 text-[11px] font-bold">
        <Svg w={20} h={20}>
          <path d="M0 8c4-9 7-8 10 0s6 2 9-4v7c-4 3-7 1-9-3s-6-2-10 3z" fill="#cfeacf" />
          <path d="M0 8c4-9 7-8 10 0s6 2 9-6" stroke="#28a838" strokeWidth="1.300" />
          <path d="M0 4c6-1 7 6 11 6s5-3 8-3" stroke="#e04040" strokeWidth="1.200" />
          <path d="M0 14h4v5H0zM8 15h4v4H8zM15 13h4v6h-4z" fill="#28c83c" />
          <path d="M4 15h4v4H4zM12 16h3v3h-3z" fill="#e82020" />
          <path d="M0 19.500h19" stroke="#1848d0" />
        </Svg>
        Indicateurs
      </button>
      <Sep />
      <IconButton label="Indicateurs favoris" className="w-[15px]">
        <Chevron />
      </IconButton>
      <Sep />
      <div className="flex shrink-0 items-center gap-1 pl-[7px] whitespace-nowrap">
        <InfoIcon />
        <span className="mx-1 size-2 rounded-full bg-[#4a9a1e]" />
        <span className="rounded-sm border border-[#3ccf46] bg-[#5ae05f] px-0.5 leading-[14px] text-white">+0,94 %</span>
        <span className="text-[11px] font-bold">10:11:45 (UTC+2)</span>
        <span className="text-[11px]">VALNEVA</span>
      </div>
      <div className="ml-auto flex">
        <Sep />
        <IconButton label="Acheter ou vendre" className="w-[21px]">
          <Svg w={20} h={18}>
            <path d="M11 2C6 1 4 4 4 8" stroke="#e04048" strokeWidth="3" />
            <path d="M0 7h9l-4.500 6z" fill="#e04048" />
            <path d="M8 16c6 1 8-2 8-6" stroke="#28b43c" strokeWidth="3" />
            <path d="M11 11h9l-4.500-6z" fill="#28b43c" />
          </Svg>
        </IconButton>
      </div>
    </div>
  )
}

function InfoIcon() {
  return (
    <Svg w={12} h={12}>
      <rect x=".5" y=".5" width="11" height="11" fill="#fff" stroke="#8fa0a8" />
      <path d="M6 2.500v1.500M4.500 5.500H6v4M4 9.500h4" stroke="#7f929a" strokeWidth="1.200" />
    </Svg>
  )
}

function Plot() {
  return (
    <svg className="absolute inset-0 size-full" role="img" aria-label="VLA, graphique journalier">
      <g transform={`translate(${-PLOT_LEFT} ${-PLOT_TOP})`}>
        {CANDLES.map(([high, top, bottom, low, dir], i) => {
          const x = 522 + Math.round(i * BAR_STEP)
          return (
            <g key={i}>
              <rect x={x} y={high} width="1" height={low - high} fill="#000" />
              <rect x={x - 2} y={top} width="5" height={bottom - top} fill="#000" />
              {bottom - top > 2 && (
                <rect x={x - 1} y={top + 1} width="3" height={bottom - top - 2} fill={dir === 'g' ? '#58d862' : '#e06a6c'} />
              )}
            </g>
          )
        })}
        {ARROWS.map(([x, y]) => (
          <path key={x} d={`M${x} ${y}l6 5h-3v9h-6v-9h-3z`} fill="#000" />
        ))}
        <path d="M951 125L1870 910" stroke="#ff1e24" strokeWidth="1.100" />
      </g>
    </svg>
  )
}

function PriceAxis() {
  const labels = ['4,4', '4,2', '4', '3,8', '3,6', '3,4', '3,2', '3', '', '2,6', '2,4', '2,2', '2', '1,8']
  return (
    <div className="relative w-[46px] shrink-0 border-l border-[#a8a8a8]">
      <svg className="absolute inset-0 size-full">
        {labels.map((label, i) => {
          const y = 25 + Math.round(i * 61.8)
          return (
            <g key={i}>
              <path d={`M0 ${y + 0.5}h4M0 ${y + 31.5}h2`} stroke="#999" />
              <text x="6" y={y + 5} fontSize="12" fontWeight={label.length === 1 ? 700 : 500}>
                {label}
              </text>
            </g>
          )
        })}
        <text x="6" y="888" fontSize="12" fontWeight="500">1,6</text>
      </svg>
      <div className="absolute top-[513px] right-0 w-[41px] overflow-hidden whitespace-nowrap">
        <div className="border border-[#c8a840] bg-[#fbd144] text-[14px] leading-4 font-bold">2,798</div>
        <div className="bg-[#84e08a] pl-0.5 text-[11px] leading-[14px] font-medium">7h18m</div>
      </div>
    </div>
  )
}

function TimeAxis() {
  return (
    <div className="relative h-[18px] shrink-0 bg-[#f3eded]">
      <svg className="absolute inset-0 size-full">
        {[...DATES.map((d) => d[0]), ...EXTRA_TICKS].map((x) => (
          <path key={x} d={`M${x - PLOT_LEFT + 0.5} 0v3`} stroke="#999" />
        ))}
        {DATES.map(([x, label, bold]) => (
          <text key={x} x={x - PLOT_LEFT} y="14" textAnchor="middle" fontSize="12" fontWeight={bold ? 700 : 400}>
            {label}
          </text>
        ))}
      </svg>
      <button
        type="button"
        aria-label="Défiler"
        className="absolute top-0.5 right-0 flex h-4 w-6 items-center justify-center border-t border-l border-[#b0b0b0] bg-[#f6f6f6]"
      >
        <Svg w={20} h={16}>
          <path d="M10 7V4" stroke="#1d62c8" strokeWidth="2.500" />
          <path d="M6.500 4.500h7L10 1z" fill="#1d62c8" />
          <path d="M1.500 8.500h17v6h-17z" fill="#fff" stroke="#888" />
          <path d="M3.500 11.500h13" stroke="#222" strokeWidth="3" strokeDasharray="2.500 1" />
        </Svg>
      </button>
    </div>
  )
}

function PageIcon({ up = false }: { up?: boolean }) {
  return (
    <Svg w={13} h={13}>
      <path d="M.5.5h9l3 3v9H.5z" fill="#eaf2f8" stroke="#8aa4b8" />
      {up ? (
        <path d="M6.500 2.500l4 4.500h-2.500v4H5V7H2.500z" fill="#28b83c" />
      ) : (
        <path d="M6.500 11L2.500 6.500H5v-4h3v4h2.500z" fill="#e03038" />
      )}
    </Svg>
  )
}

function ChartPane() {
  return (
    <section className="flex min-w-0 flex-1 flex-col">
      <ChartHeader />
      <div className="flex min-h-0 flex-1">
        <aside className="flex w-[31px] shrink-0 flex-col items-center overflow-hidden border-r border-[#b0b0b0] pt-px">
          <ToolButtons />
          <div className="mt-auto flex h-16 w-full flex-col items-center justify-between border-t border-[#b0b0b0] pt-1 pb-1">
            <IconButton label="Liste de trading">
              <Svg w={22} h={24}>
                <path d="M6.500 3.500h8l4 4v12h-12z" fill="#fff" stroke="#999" />
                <path d="M7 15l4-6 5 6" stroke="#e04040" />
                <path d="M8 17h4" stroke="#28a838" strokeWidth="1.500" />
                <path d="M13 20l4-5c-.5-2 .5-3 2-3.500v2l2 .5 1-1c0 2-1 3.500-2.500 3.500L16 22z" fill="#fff" stroke="#222" />
                <circle cx="5" cy="5" r="4.800" fill="#128a22" />
                <path d="M3.500 4L5.500 2.500v5" stroke="#fff" strokeWidth="1.300" />
                <path d="M14 21h6l-3 3z" fill="#111" />
              </Svg>
            </IconButton>
            <IconButton label="Plus d'outils">
              <Svg w={18} h={14}>
                <circle cx="3" cy="4" r="1.800" fill="#333" />
                <circle cx="8.500" cy="4" r="1.800" fill="#333" />
                <circle cx="14" cy="4" r="1.800" fill="#333" />
                <path d="M11 9h6l-3 3z" fill="#111" />
              </Svg>
            </IconButton>
          </div>
        </aside>
        <div className="flex min-w-0 flex-1 flex-col">
          <div className="flex min-h-0 flex-1 bg-[#f3eded]">
            <div className="flex min-w-0 flex-1 flex-col">
              <div className="relative min-h-0 flex-1 overflow-hidden bg-linear-to-b from-white via-[#f8f6f6] to-[#f3eded]">
                <div className="absolute top-0 right-2.5 text-right text-[#dcdcdc]">
                  <div className="text-[34px] leading-[38px]">VLA, J</div>
                  <div className="text-[21px] leading-[26px]">Euronext Paris</div>
                </div>
                <Plot />
                <div className="absolute top-0 left-0 flex h-[17px] items-center border-r border-b border-[#a8a8a8] bg-white">
                  <button type="button" aria-label="Vendre" className="ml-0.5"><PageIcon /></button>
                  <button type="button" aria-label="Acheter" className="mx-[3px]"><PageIcon up /></button>
                  <Sep />
                  <button type="button" className="flex items-center gap-1 px-[3px] text-[11px] leading-4 font-medium">
                    <Svg w={10} h={10}>
                      <path d="M0 0h5v10H0z" fill="#50d060" />
                      <path d="M5 0h5v10H5z" fill="#dc6468" />
                    </Svg>
                    Prix
                  </button>
                  <Sep />
                  <button type="button" aria-label="Liste" className="px-1">
                    <Svg w={10} h={10}>
                      <path d="M0 1.500h2M0 5h2M0 8.500h2M3.500 1.500H10M3.500 5H10M3.500 8.500H10" stroke="#111" strokeWidth="1.300" />
                    </Svg>
                  </button>
                </div>
                <div className="absolute bottom-0 left-0.5 text-[11px] leading-3">ProRealTime Trading – Temps Réel</div>
                <button type="button" aria-label="Information" className="absolute bottom-0.5 left-[1033px]">
                  <InfoIcon />
                </button>
              </div>
              <div className="flex h-[19px] shrink-0 items-stretch border-y border-[#a8a8a8] whitespace-nowrap">
                <button type="button" aria-label="Détacher" className="flex w-4 items-center justify-center bg-[#f8f8f8]">
                  <Svg w={12} h={12}>
                    <path d="M4.500.5h7v6h-7z" fill="#fff" stroke="#667" />
                    <path d="M4 0h8v2H4z" fill="#667" />
                    <path d="M.5 4.500h7v6h-7z" fill="#fff" stroke="#667" />
                    <path d="M0 4h8v2H0z" fill="#667" />
                  </Svg>
                </button>
                <Sep />
                <span className="flex items-center gap-[3px] bg-[#f8f8f8] px-0.5">
                  Capital échangé <span className="text-[#4fd45c]">301 249</span>
                </span>
                <Sep />
                <span className="flex items-center bg-[#f8f8f8] pr-2 pl-0.5">RSI (14) 44,326</span>
                <Sep />
                <span className="flex items-center bg-[#f8f8f8] px-0.5">Elder Impulse Candles v2.1 (13 1 2 0,5 t f t t) 0</span>
                <Sep />
              </div>
            </div>
            <PriceAxis />
          </div>
          <TimeAxis />
        </div>
      </div>
    </section>
  )
}

export default function App() {
  return (
    <div className="flex h-screen flex-col overflow-hidden border-b border-[#7c7c7c] bg-[#efefef] font-['Noto_Sans',sans-serif] text-[12px] leading-4 text-black">
      <MenuBar />
      <MainToolbar />
      <div className="flex h-[37px] shrink-0 items-center border-b-2 border-[#7c7c7c] bg-[#f6f6f6] pl-[5px]">
        <ToolButtons />
      </div>
      <main className="flex min-h-0 flex-1">
        <Screener />
        <ChartPane />
      </main>
    </div>
  )
}
